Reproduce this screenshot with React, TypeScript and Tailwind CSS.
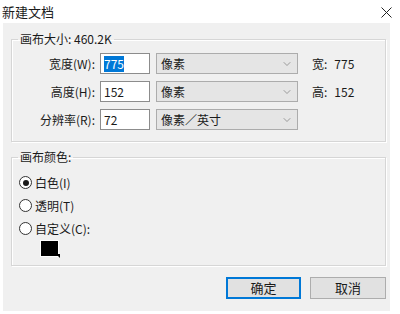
import { ChevronDown } from 'lucide-react'

const sizeRows = [
  { label: '宽度(W):', value: '775', unit: '像素', note: '宽:', noteValue: '775', selected: true },
  { label: '高度(H):', value: '152', unit: '像素', note: '高:', noteValue: '152' },
  { label: '分辨率(R):', value: '72', unit: '像素／英寸' },
]

const colorOptions = [
  { label: '白色(I)', checked: true },
  { label: '透明(T)' },
  { label: '自定义(C):' },
]

function Radio({ checked }: { checked?: boolean }) {
  return (
    <span className="flex h-[13px] w-[13px] items-center justify-center rounded-full border border-[#333] bg-white">
      {checked && <span className="h-[6px] w-[6px] rounded-full bg-[#1a1a1a]" />}
    </span>
  )
}

export default function App() {
  return (
    <div className="h-[314px] w-[400px] overflow-hidden bg-white font-['Microsoft_YaHei','Noto_Sans_CJK_SC',sans-serif] text-[12px] leading-[16px] text-[#1a1a1a]">
      <div className="flex h-[23px] items-center justify-between pl-[2px] pr-[8px]">
        <span className="text-[13px]">新建文档</span>
        <svg width="11" height="11" viewBox="0 0 11 11" className="mt-[1px]">
          <path d="M0.5 0.5 L10.5 10.5 M10.5 0.5 L0.5 10.5" stroke="#222" strokeWidth="1" fill="none" />
        </svg>
      </div>

      <div className="ml-[3px] flex h-[288px] w-[387px] flex-col bg-[#f0f0f0] pl-[8px] pr-[4px]">
        <fieldset className="mt-[8px] w-[375px] border border-[#d6d6d6] pb-[11px] pt-[6px] shadow-[inset_1px_1px_0_#fff,1px_1px_0_#fff]">
          <legend className="ml-[6px] px-[2px]">画布大小: 460.2K</legend>
          <div className="flex flex-col gap-[7px]">
            {sizeRows.map((row) => (
              <div key={row.label} className="flex h-[21px] items-center">
                <span className="w-[83px] text-right">{row.label}</span>
                <div className="ml-[5px] flex h-[21px] w-[50px] items-center border border-[#8c8c8c] bg-white pl-[3px]">
                  <span className={row.selected ? 'bg-[#0078d7] text-white' : ''}>{row.value}</span>
                </div>
                <div className="ml-[6px] flex h-[21px] w-[142px] items-center justify-between border border-[#acacac] bg-[#e5e5e5] pl-[4px] pr-[4px]">
                  <span>{row.unit}</span>
                  <ChevronDown size={12} strokeWidth={1.2} className="text-[#666]" />
                </div>
                {row.note && (
                  <span className="ml-[14px] flex gap-[7px]">
                    <span>{row.note}</span>
                    <span>{row.noteValue}</span>
                  </span>
                )}
              </div>
            ))}
          </div>
        </fieldset>

        <fieldset className="mt-[7px] w-[375px] border border-[#d6d6d6] pb-[8px] pl-[7px] pt-[6px] shadow-[inset_1px_1px_0_#fff,1px_1px_0_#fff]">
          <legend className="-ml-[1px] px-[2px]">画布颜色:</legend>
          <div className="flex flex-col">
            {colorOptions.map((opt) => (
              <div key={opt.label} className="flex h-[23px] items-center gap-[3px]">
                <Radio checked={opt.checked} />
                <span>{opt.label}</span>
              </div>
            ))}
            <div className="relative ml-[21px] h-[17px] w-[19px] border border-white bg-black">
              <span className="absolute -bottom-[2px] -right-[2px] h-0 w-0 border-l-[4px] border-t-[4px] border-l-transparent border-t-black" />
            </div>
          </div>
        </fieldset>

        <div className="mt-[11px] flex w-[375px] justify-end gap-[9px]">
          <button className="flex h-[22px] w-[75px] items-center justify-center border border-[#0078d7] bg-[#e1e1e1] text-[13px] shadow-[inset_0_0_0_1px_#0078d7]">
            确定
          </button>
          <button className="flex h-[22px] w-[76px] items-center justify-center border border-[#adadad] bg-[#e1e1e1] text-[13px]">
            取消
          </button>
        </div>
      </div>
    </div>
  )
}
